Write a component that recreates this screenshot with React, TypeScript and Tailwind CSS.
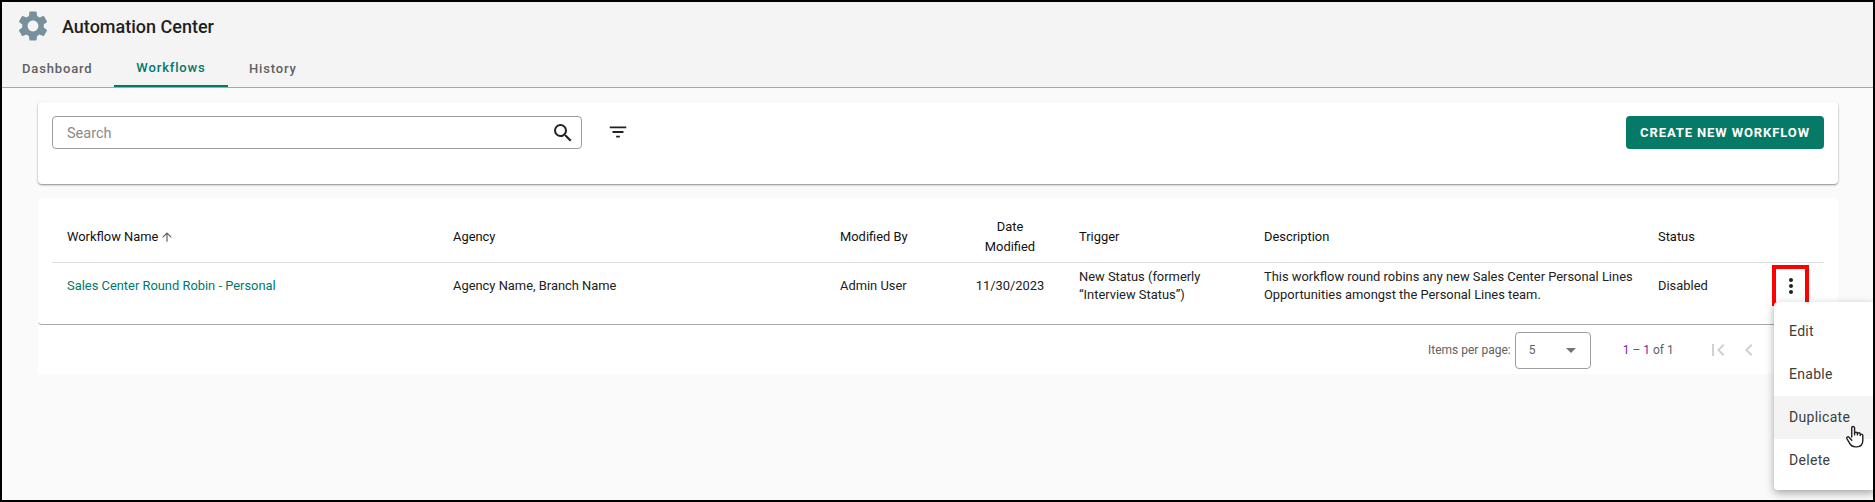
import React from 'react';

const columns = 'grid grid-cols-[386px_387px_120px_119px_185px_394px_114px_37px]';

const MenuItem = ({ label, active }: { label: string; active?: boolean }) => (
    <div className={`h-[43px] flex items-center pl-[15px] text-[14px] tracking-[0.3px] text-[#3d3d3d] ${active ? 'bg-[#f4f4f4]' : ''}`}>
        {label}
    </div>
);

const Icon = ({ d, className }: { d: string; className: string }) => (
    <svg viewBox="0 0 24 24" className={className} fill="currentColor">
        <path d={d} />
    </svg>
);

export default function App() {
    return (
        <div className="relative w-[1875px] h-[502px] overflow-hidden border-2 border-black bg-[#fafafa] font-['Roboto',sans-serif] text-[12.9px] text-[#212121]">
            <header className="h-[86px] bg-[#f4f4f4] border-b border-[#a8a8a8]">
                <div className="h-[48px] flex items-center pl-[13px]">
                    <Icon
                        className="w-[36px] h-[36px] text-[#78909c]"
                        d="M19.14 12.94c.04-.3.06-.61.06-.94 0-.32-.02-.64-.07-.94l2.03-1.58a.49.49 0 0 0 .12-.61l-1.92-3.32a.488.488 0 0 0-.59-.22l-2.39.96c-.5-.38-1.03-.7-1.62-.94l-.36-2.54a.484.484 0 0 0-.48-.41h-3.84c-.24 0-.43.17-.47.41l-.36 2.54c-.59.24-1.13.57-1.62.94l-2.39-.96c-.22-.08-.47 0-.59.22L2.74 8.87c-.12.21-.08.47.12.61l2.03 1.58c-.05.3-.09.63-.09.94s.02.64.07.94l-2.03 1.58a.49.49 0 0 0-.12.61l1.92 3.32c.12.22.37.29.59.22l2.39-.96c.5.38 1.03.7 1.62.94l.36 2.54c.05.24.24.41.48.41h3.84c.24 0 .44-.17.47-.41l.36-2.54c.59-.24 1.13-.56 1.62-.94l2.39.96c.22.08.47 0 .59-.22l1.92-3.32c.12-.22.07-.47-.12-.61l-2.01-1.58zM12 15.6c-1.98 0-3.6-1.62-3.6-3.6s1.62-3.6 3.6-3.6 3.6 1.62 3.6 3.6-1.62 3.6-3.6 3.6z"
                    />
                    <span className="ml-[11px] text-[18px] font-medium text-[#1f1f1f]">Automation Center</span>
                </div>
                <nav className="h-[37px] flex text-[13px] font-medium tracking-[0.85px] text-[#616161]">
                    <div className="w-[112px] pl-[20px] flex items-center pt-[1px]">Dashboard</div>
                    <div className="w-[114px] justify-center flex items-center pt-[1px] text-[#00796b] border-b-2 border-[#00796b]">Workflows</div>
                    <div className="px-[21px] flex items-center pt-[1px]">History</div>
                </nav>
            </header>

            <main className="pl-[36px] pt-[14px] w-[1836px]">
                <section className="h-[82px] bg-white rounded-[4px] shadow-[0_1px_2px_rgba(0,0,0,0.45)] px-[14px] pt-[14px] flex items-start">
                    <div className="w-[530px] h-[33px] rounded-[4px] border border-[#9e9e9e] flex items-center justify-between pl-[14px] pr-[6px] text-[#8a8a8a] text-[14.5px]">
                        <span className="pt-[2px]">Search</span>
                        <Icon
                            className="w-[24px] h-[24px] text-[#212121]"
                            d="M15.5 14h-.79l-.28-.27A6.471 6.471 0 0 0 16 9.5 6.5 6.5 0 1 0 9.5 16c1.61 0 3.09-.59 4.23-1.57l.27.28v.79l5 4.99L20.49 19l-4.99-5zm-6 0C7.01 14 5 11.99 5 9.5S7.01 5 9.5 5 14 7.01 14 9.5 11.99 14 9.5 14z"
                        />
                    </div>
                    <Icon className="w-[22px] h-[22px] ml-[25px] mt-[5px] text-[#212121]" d="M10 18h4v-2h-4v2zM3 6v2h18V6H3zm3 7h12v-2H6v2z" />
                    <button className="ml-auto w-[198px] h-[33px] rounded-[4px] bg-[#047a67] text-white text-[13px] font-bold tracking-[0.9px]">
                        CREATE NEW WORKFLOW
                    </button>
                </section>

                <section className="mt-[14px] h-[127px] bg-white rounded-[4px] border-b border-[#a8a8a8] px-[14px]">
                    <div className={`${columns} h-[65px] items-center px-[15px] pt-[14px] border-b border-[#e0e0e0] text-[#111111] leading-[20px]`}>
                        <div className="flex items-center gap-[2px]">
                            Workflow Name
                            <Icon className="w-[14px] h-[14px] text-[#616161]" d="M4 12l1.41 1.41L11 7.83V20h2V7.83l5.58 5.59L20 12l-8-8-8 8z" />
                        </div>
                        <div>Agency</div>
                        <div>Modified By</div>
                        <div className="ml-[20px] w-[60px] text-center">Date Modified</div>
                        <div>Trigger</div>
                        <div>Description</div>
                        <div>Status</div>
                        <div />
                    </div>
                    <div className={`${columns} items-center px-[15px] pt-[2px] leading-[18px]`}>
                        <div className="text-[#00796b]">Sales Center Round Robin - Personal</div>
                        <div>Agency Name, Branch Name</div>
                        <div>Admin User</div>
                        <div className="w-[100px] text-center">11/30/2023</div>
                        <div className="w-[170px]">New Status (formerly “Interview Status”)</div>
                        <div>
                            This workflow round robins any new Sales Center Personal Lines Opportunities amongst the Personal Lines team.
                        </div>
                        <div>Disabled</div>
                        <div className="w-[37px] h-[41px] border-[4px] border-[#ff0000] flex items-center justify-center">
                            <Icon className="w-[24px] h-[24px] shrink-0 text-[#212121]" d="M12 8c1.1 0 2-.9 2-2s-.9-2-2-2-2 .9-2 2 .9 2 2 2zm0 2c-1.1 0-2 .9-2 2s.9 2 2 2 2-.9 2-2-.9-2-2-2zm0 6c-1.1 0-2 .9-2 2s.9 2 2 2 2-.9 2-2-.9-2-2-2z" />
                        </div>
                    </div>
                </section>

                <section className="h-[49px] bg-white flex items-center pt-[1px] text-[12px] text-[#616161]">
                    <div className="ml-[1390px]">Items per page:</div>
                    <div className="ml-[4px] w-[76px] h-[37px] rounded-[4px] border border-[#9e9e9e] flex items-center justify-between pl-[13px] pr-[14px]">
                        <span>5</span>
                        <span className="w-0 h-0 border-x-[5px] border-x-transparent border-t-[5px] border-t-[#757575]" />
                    </div>
                    <div className="ml-[32px]">
                        <span className="text-[#7b1fa2]">1</span> – <span className="text-[#7b1fa2]">1</span> of 1
                    </div>
                    <Icon className="ml-[32px] w-[24px] h-[24px] text-[#d0d0d0]" d="M18.41 16.59 13.82 12l4.59-4.59L17 6l-6 6 6 6zM6 6h2v12H6z" />
                    <Icon className="ml-[7px] w-[24px] h-[24px] text-[#d0d0d0]" d="M15.41 7.41 14 6l-6 6 6 6 1.41-1.41L10.83 12z" />
                </section>
            </main>

            <div className="absolute left-[1772px] top-[300px] w-[101px] h-[188px] py-[8px] bg-white rounded-l-[4px] shadow-[0_3px_8px_rgba(0,0,0,0.35)]">
                <MenuItem label="Edit" />
                <MenuItem label="Enable" />
                <MenuItem label="Duplicate" active />
                <MenuItem label="Delete" />
            </div>

            <svg viewBox="0 0 24 24" className="absolute left-[1840px] top-[421px] w-[26px] h-[26px]" fill="#ffffff" stroke="#222222" strokeWidth="1.3" strokeLinejoin="round" strokeLinecap="round">
                <path d="M9 13V4.5a1.3 1.3 0 0 1 2.6 0V11v-1.2a1.3 1.3 0 0 1 2.6 0V11v-.7a1.3 1.3 0 0 1 2.6 0V11.5a1.2 1.2 0 0 1 2.4 0V16c0 3.5-2 6-5.5 6h-1.5c-2.5 0-3.8-1-5-3l-2.7-4.5c-.7-1.3 1.1-2.4 2.1-1.2L9 16" />
            </svg>
        </div>
    );
}
